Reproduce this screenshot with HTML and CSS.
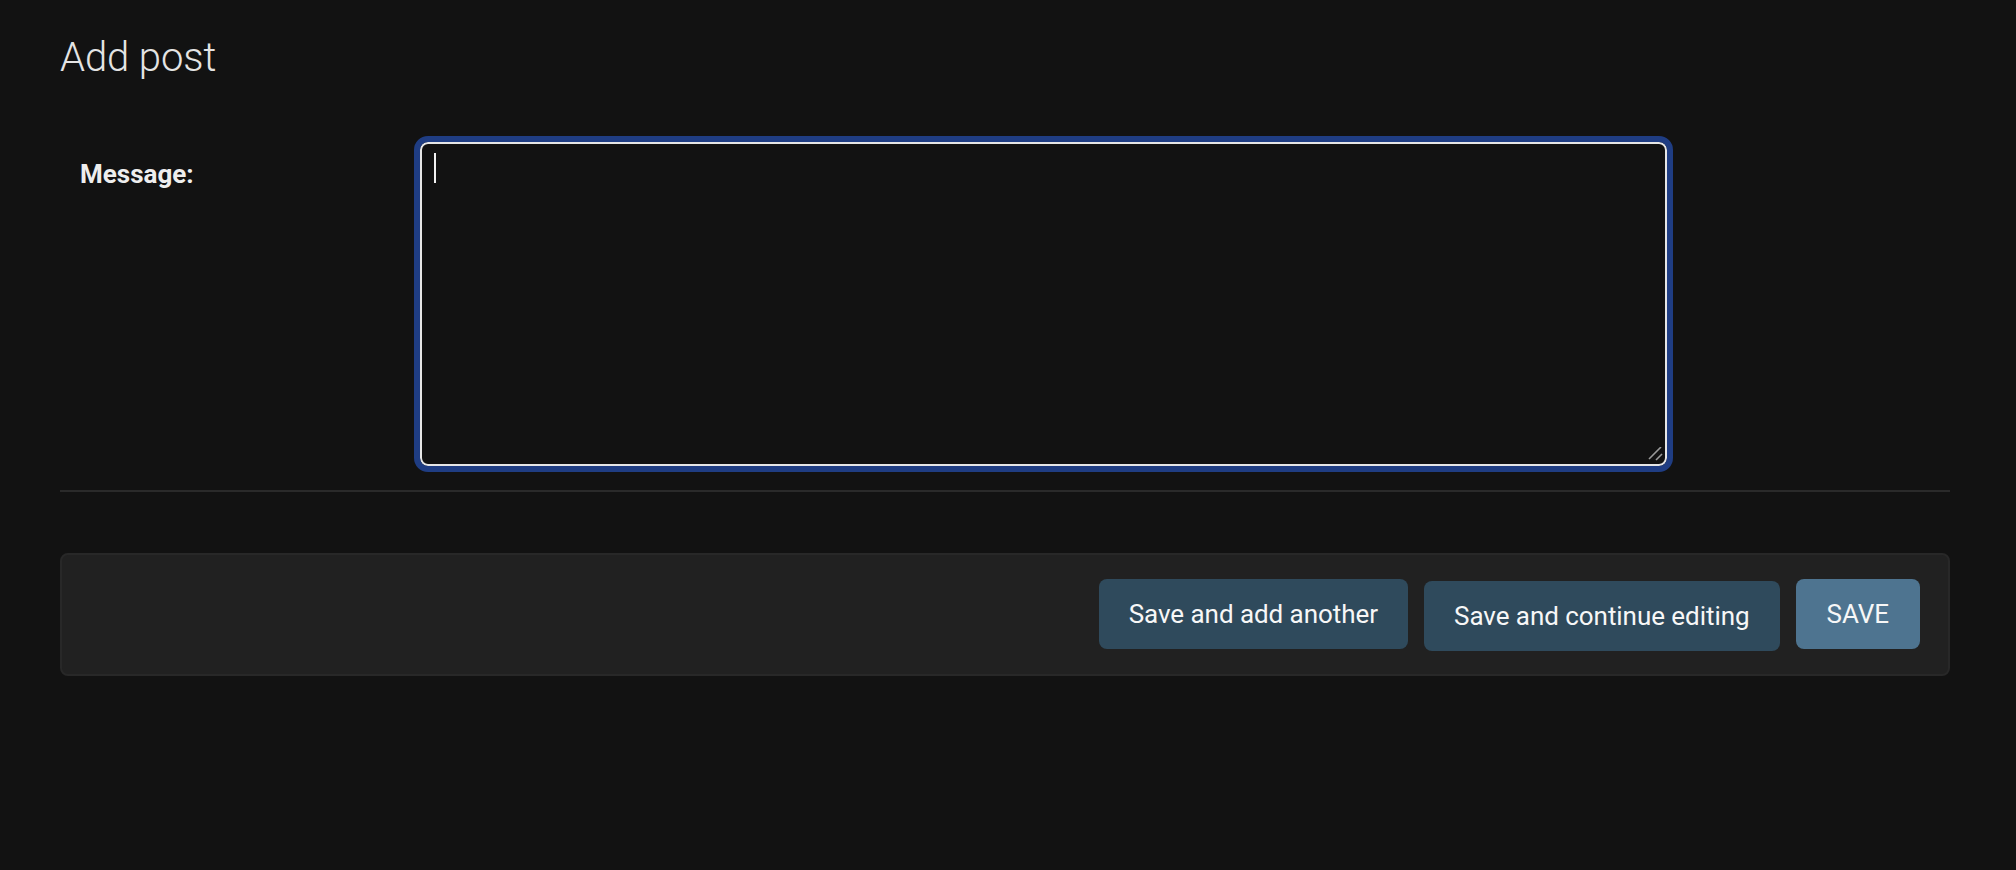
FILE: index.html
```html
<!DOCTYPE html>
<html lang="en">
<head>
<meta charset="utf-8">
<title>Add post</title>
<link rel="stylesheet" href="styles.css">
</head>
<body>
<main class="content">
  <h1 class="title">Add post</h1>
  <form class="post-form">
    <div class="form-row">
      <label class="field-label required" for="id_message">Message:</label>
      <div class="field">
        <textarea id="id_message" class="text-input" name="message"></textarea>
        <span class="caret"></span>
        <svg class="grip" width="16" height="16" viewBox="0 0 16 16" aria-hidden="true">
          <line x1="1" y1="12" x2="13" y2="0" />
          <line x1="8" y1="13" x2="14" y2="7" />
        </svg>
      </div>
    </div>
    <div class="submit-row">
      <button type="button" class="btn">Save and add another</button>
      <button type="button" class="btn btn-shift">Save and continue editing</button>
      <button type="button" class="btn btn-default">SAVE</button>
    </div>
  </form>
</main>
</body>
</html>
```
FILE: styles.css
```css
html, body {
  margin: 0;
  padding: 0;
  background: #121212;
  color-scheme: dark;
}

body {
  font-family: Roboto, "Liberation Sans", Arial, sans-serif;
  color: #eeeeee;
}

.content {
  padding: 34px 66px 0 60px;
}

.title {
  margin: 0;
  font-size: 40px;
  font-weight: 300;
  line-height: 48px;
  color: #e4e4e4;
  letter-spacing: -0.1px;
}

.post-form {
  margin-top: 40px;
}

.form-row {
  display: flex;
  align-items: flex-start;
  padding: 20px 20px 24px 20px;
  border-bottom: 2px solid #2a2a2a;
}

.field-label {
  width: 340px;
  flex: none;
  padding-top: 16px;
  font-size: 26px;
  line-height: 32px;
  font-weight: 700;
  color: #eeeeee;
}

.field {
  position: relative;
  width: 1247px;
  height: 324px;
}

.text-input {
  display: block;
  box-sizing: border-box;
  width: 100%;
  height: 100%;
  margin: 0;
  padding: 10px 12px;
  background: #121212;
  color: #eeeeee;
  border: 2px solid #e6e6e6;
  border-radius: 8px;
  outline: 6px solid #1f3d83;
  outline-offset: 0;
  resize: none;
  font-family: Roboto, "Liberation Sans", Arial, sans-serif;
  font-size: 28px;
}

.caret {
  position: absolute;
  left: 14px;
  top: 11px;
  width: 2px;
  height: 30px;
  background: #f2f2f2;
}

.grip {
  position: absolute;
  right: 3px;
  bottom: 3px;
  stroke: #9a9a9a;
  stroke-width: 1.6;
}

.submit-row {
  display: flex;
  justify-content: flex-end;
  align-items: flex-start;
  gap: 16px;
  margin-top: 61px;
  padding: 24px 28px 23px;
  background: #212121;
  border: 2px solid #282828;
  border-radius: 8px;
}

.btn {
  height: 70px;
  padding: 0 30px;
  border: none;
  border-radius: 8px;
  background: #2f4a5c;
  color: #f7f7f7;
  font-family: Roboto, "Liberation Sans", Arial, sans-serif;
  font-size: 26px;
  font-weight: 400;
  line-height: 30px;
  letter-spacing: -0.05px;
  cursor: pointer;
}

.btn-shift {
  margin-top: 2px;
}

.btn-default {
  background: #4e7490;
  padding: 0 31px;
}
```
